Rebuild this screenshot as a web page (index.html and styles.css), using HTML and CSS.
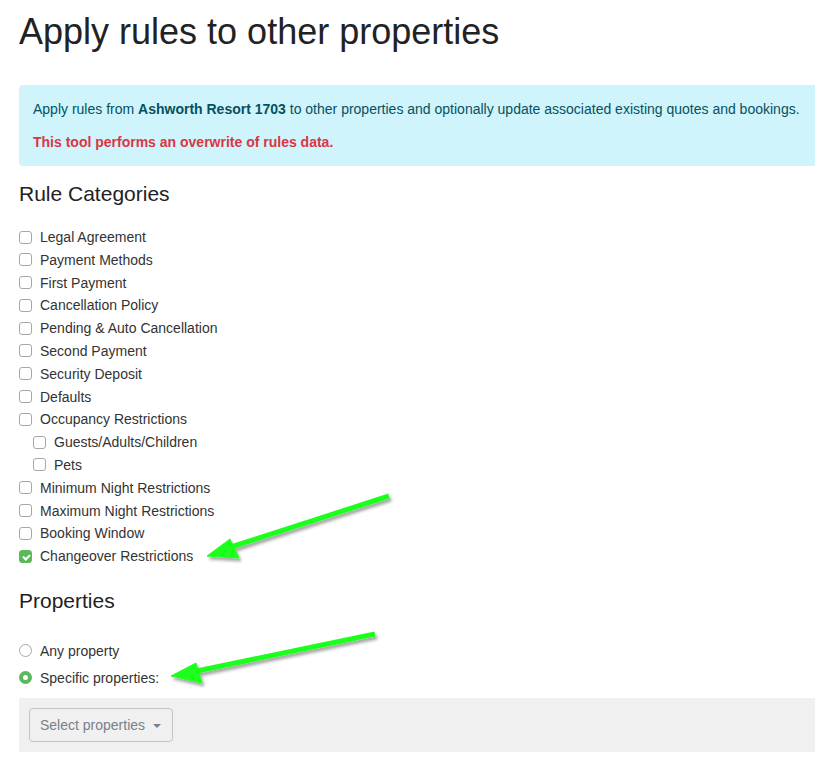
FILE: index.html
```html
<!DOCTYPE html>
<html lang="en">
<head>
  <meta charset="UTF-8" />
  <meta name="viewport" content="width=device-width, initial-scale=1.0"/>
  <title>Apply rules to other properties</title>
  <link rel="stylesheet" href="styles.css">
</head>
<body>
  <div class="page">
    <h1>Apply rules to other properties</h1>

    <div class="alert-info">
      <p>Apply rules from <strong>Ashworth Resort 1703</strong> to other properties and optionally update associated existing quotes and bookings.</p>
      <p class="warning">This tool performs an overwrite of rules data.</p>
    </div>

    <h3>Rule Categories</h3>
    <ul class="categories">
      <li><label><input type="checkbox"> Legal Agreement</label></li>
      <li><label><input type="checkbox"> Payment Methods</label></li>
      <li><label><input type="checkbox"> First Payment</label></li>
      <li><label><input type="checkbox"> Cancellation Policy</label></li>
      <li><label><input type="checkbox"> Pending &amp; Auto Cancellation</label></li>
      <li><label><input type="checkbox"> Second Payment</label></li>
      <li><label><input type="checkbox"> Security Deposit</label></li>
      <li><label><input type="checkbox"> Defaults</label></li>
      <li><label><input type="checkbox"> Occupancy Restrictions</label></li>
      <li class="sub"><label><input type="checkbox"> Guests/Adults/Children</label></li>
      <li class="sub"><label><input type="checkbox"> Pets</label></li>
      <li><label><input type="checkbox"> Minimum Night Restrictions</label></li>
      <li><label><input type="checkbox"> Maximum Night Restrictions</label></li>
      <li><label><input type="checkbox"> Booking Window</label></li>
      <li><label><input type="checkbox" checked> Changeover Restrictions</label></li>
    </ul>

    <h3 class="props-title">Properties</h3>
    <div class="radios">
      <label><input type="radio" name="scope"> Any property</label>
      <label><input type="radio" name="scope" checked> Specific properties:</label>
    </div>

    <div class="well">
      <button type="button" class="select-btn">Select properties <span class="caret"></span></button>
    </div>
  </div>

  <!-- annotation arrows drawn over the screenshot -->
  <svg class="arrows" width="815" height="762" viewBox="0 0 815 762">
    <defs>
      <filter id="shadow" x="-10%" y="-30%" width="130%" height="180%">
        <feDropShadow dx="2" dy="3" stdDeviation="1.5" flood-color="#000" flood-opacity="0.35"/>
      </filter>
    </defs>
    <g fill="#1eff1e" stroke="#1eff1e" filter="url(#shadow)">
      <line x1="389" y1="496" x2="228" y2="548" stroke-width="5"/>
      <polygon points="207,556 230,539 239,558" stroke-width="1" stroke-linejoin="round"/>
      <line x1="375" y1="634" x2="192" y2="672" stroke-width="5"/>
      <polygon points="171,676 196,663 202,683" stroke-width="1" stroke-linejoin="round"/>
    </g>
  </svg>
</body>
</html>
```

FILE: styles.css
```css
body {
  font-family: "Liberation Sans", Arial, sans-serif;
  font-size: 14px;
  line-height: 20px;
  color: #333;
  background: white;
  margin: 0;
  overflow: hidden;
}

.page {
  padding: 0 0 0 19px;
}

h1 {
  font-size: 36px;
  font-weight: normal;
  line-height: 40px;
  margin: 12px 0 33px;
  color: #222;
}

.alert-info {
  background: #cff4fc;
  color: #055160;
  border-radius: 4px 0 0 4px;
  padding: 14px;
}

.alert-info p {
  margin: 0;
}

.alert-info .warning {
  margin-top: 13px;
  color: #dc3545;
  font-weight: bold;
}

h3 {
  font-size: 21px;
  font-weight: normal;
  line-height: 24px;
  margin: 16px 0 0;
  color: #222;
}

.categories {
  list-style: none;
  padding: 0;
  margin: 20px 0 0;
}

.categories li {
  height: 22.8px;
  line-height: 22px;
}

.categories li.sub {
  padding-left: 14px;
}

label {
  display: inline-flex;
  align-items: center;
  gap: 8px;
  cursor: pointer;
}

input[type="checkbox"],
input[type="radio"] {
  appearance: none;
  -webkit-appearance: none;
  width: 13px;
  height: 13px;
  margin: 0;
  border: 1px solid #a3a8ad;
  background: white;
  flex: none;
}

input[type="checkbox"] {
  border-radius: 3px;
}

input[type="checkbox"]:checked {
  background: #5cb85c;
  border-color: #5cb85c;
  position: relative;
}

input[type="checkbox"]:checked::after {
  content: "";
  position: absolute;
  left: 3.5px;
  top: 2px;
  width: 3px;
  height: 5px;
  border: solid white;
  border-width: 0 2px 2px 0;
  transform: rotate(45deg);
}

input[type="radio"] {
  border-radius: 50%;
}

input[type="radio"]:checked {
  border: 4px solid #5cb85c;
}

.props-title {
  margin-top: 21px;
}

.radios {
  display: flex;
  flex-direction: column;
  gap: 7px;
  margin-top: 28px;
}

.well {
  background: #f0f0f0;
  margin-top: 10px;
  padding: 10px;
  height: 34px;
}

.select-btn {
  font-family: inherit;
  font-size: 14px;
  color: #7a8089;
  background: #f0f0f0;
  border: 1px solid #c4c4c4;
  border-radius: 4px;
  height: 34px;
  padding: 0 11px 0 10px;
  display: inline-flex;
  align-items: center;
  gap: 8px;
}

.caret {
  display: inline-block;
  border-top: 4px solid #7a8089;
  border-left: 4px solid transparent;
  border-right: 4px solid transparent;
  margin-top: 2px;
}

.arrows {
  position: absolute;
  left: 0;
  top: 0;
  pointer-events: none;
}
```
